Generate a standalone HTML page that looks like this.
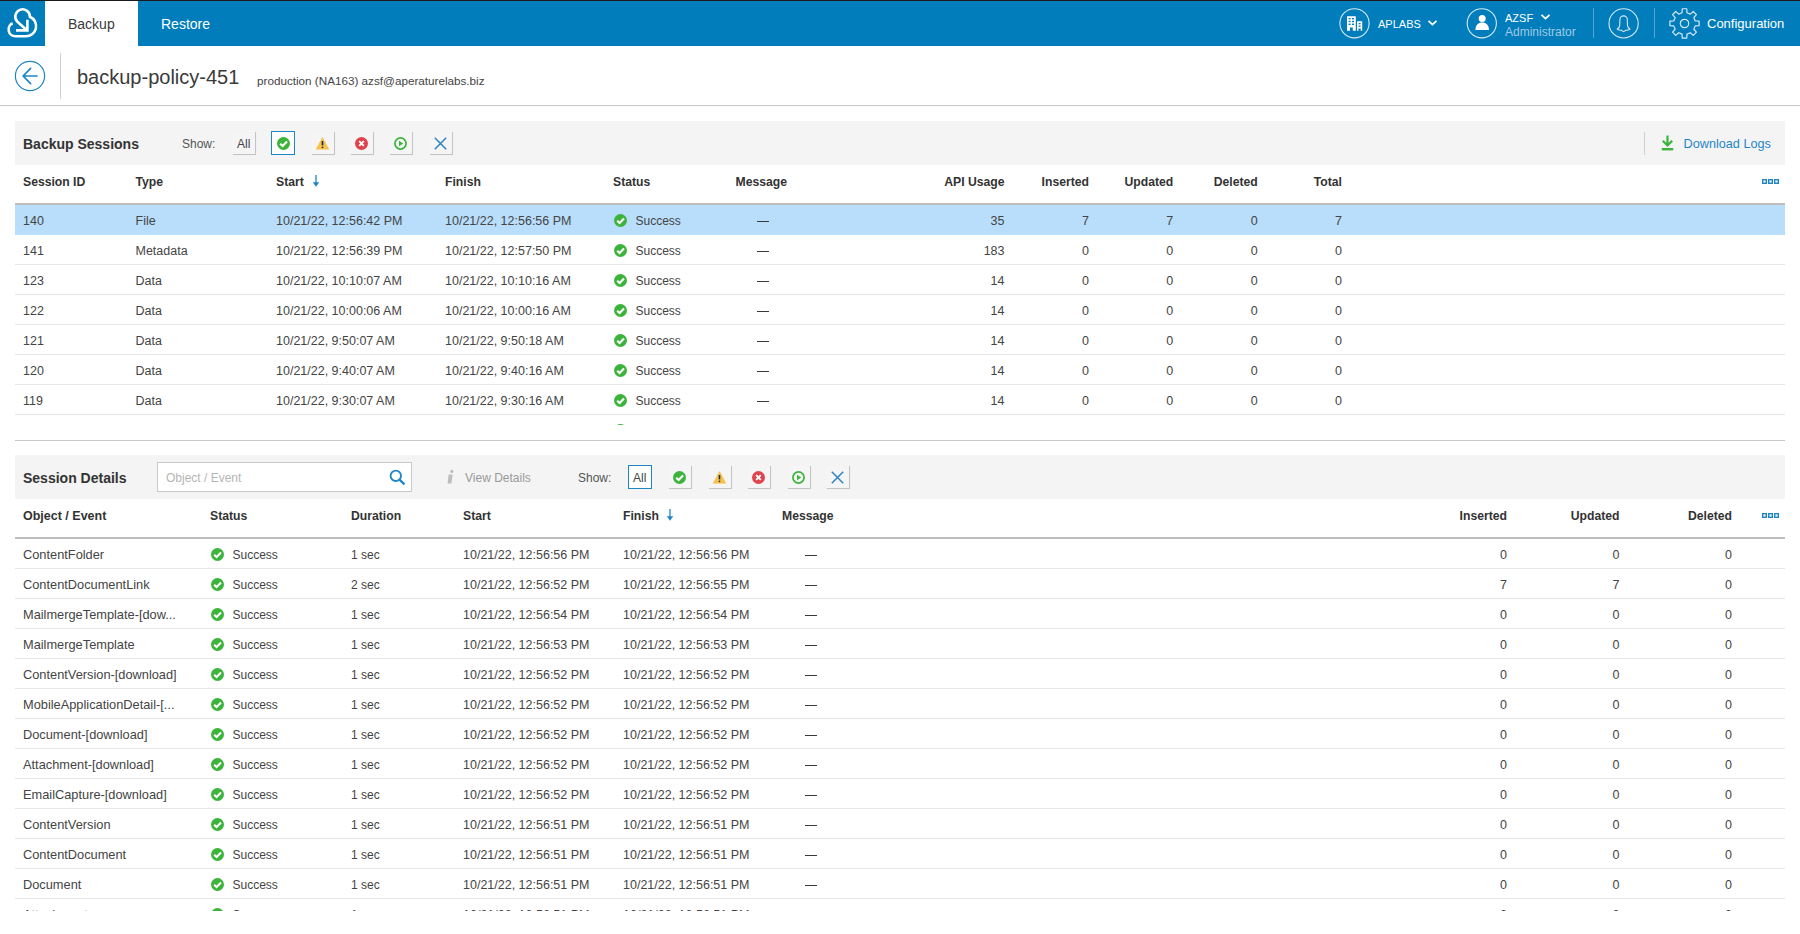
<!DOCTYPE html>
<html><head><meta charset="utf-8"><style>
html,body{margin:0;padding:0;}
body{width:1800px;height:934px;overflow:hidden;position:relative;background:#fff;font-family:"Liberation Sans", sans-serif;}
.t{position:absolute;white-space:nowrap;line-height:normal;}
</style></head><body>
<div style="position:absolute;left:0px;top:0px;width:1800px;height:1px;background:#1b1b1b"></div><div style="position:absolute;left:0px;top:1px;width:1800px;height:45px;background:#017dbb"></div><div style="position:absolute;left:45px;top:1px;width:93px;height:45px;background:#fff"></div><svg style="position:absolute;left:0;top:0" width="46" height="46" viewBox="0 0 46 46">
<path d="M12.6 23.3 A6.8 6.8 0 0 0 15.5 36.3 L25.9 36.3 A10.2 10.2 0 0 0 29.9 16.7 A7.3 7.3 0 1 0 17.44 21.76 L27.2 30.5 M27.4 19.7 L27.4 30.4 L16 30.4"
 fill="none" stroke="#fff" stroke-width="2.6" stroke-linejoin="miter" stroke-linecap="butt"/></svg><div class="t" style="left:68px;top:16px;font-size:14px;font-weight:400;color:#3a3a3a;">Backup</div><div class="t" style="left:161px;top:16px;font-size:14px;font-weight:400;color:#fff;">Restore</div><svg style="position:absolute;left:1339px;top:8px" width="31" height="31" viewBox="0 0 31 31">
<circle cx="15.5" cy="15.3" r="14.6" fill="none" stroke="#d6e9f5" stroke-width="1.1"/>
<g fill="#fff">
<path d="M8 8.2h8.8v14.6h-3v-3.2h-2.8v3.2H8z"/>
<path d="M18 13.2h5.2v9.6h-1.5v-2.2h-2.2v2.2H18z"/>
</g>
<g fill="#017dbb">
<rect x="9.6" y="10" width="2" height="1.4"/><rect x="13" y="10" width="2" height="1.4"/>
<rect x="9.6" y="12.8" width="2" height="1.4"/><rect x="13" y="12.8" width="2" height="1.4"/>
<rect x="9.6" y="15.6" width="2" height="1.4"/><rect x="13" y="15.6" width="2" height="1.4"/>
<rect x="19.6" y="15" width="2" height="1.3"/><rect x="19.6" y="17.6" width="2" height="1.3"/>
</g></svg><div class="t" style="left:1378px;top:18px;font-size:11px;font-weight:400;color:#fff;">APLABS</div><svg style="position:absolute;left:1427px;top:19px" width="11" height="8" viewBox="0 0 11 8">
<path d="M1.5 1.8 L5.5 5.6 L9.5 1.8" fill="none" stroke="#fff" stroke-width="1.8"/></svg><svg style="position:absolute;left:1466px;top:8px" width="31" height="31" viewBox="0 0 31 31">
<circle cx="15.8" cy="15.3" r="14.6" fill="none" stroke="#d6e9f5" stroke-width="1.1"/>
<circle cx="16.2" cy="10.6" r="3.5" fill="#fff"/>
<path d="M9.4 22 C9.6 16.8 12.5 14.6 16.2 14.6 C19.9 14.6 22.8 16.8 23 22 Z" fill="#fff"/></svg><div class="t" style="left:1505px;top:12px;font-size:11px;font-weight:400;color:#fff;">AZSF</div><svg style="position:absolute;left:1540px;top:13px" width="11" height="8" viewBox="0 0 11 8">
<path d="M1.5 1.8 L5.5 5.6 L9.5 1.8" fill="none" stroke="#fff" stroke-width="1.8"/></svg><div class="t" style="left:1505px;top:25px;font-size:12px;font-weight:400;color:#9fc9e5;">Administrator</div><div style="position:absolute;left:1593px;top:8px;width:1px;height:30px;background:#5aa3d3"></div><svg style="position:absolute;left:1608px;top:8px" width="31" height="31" viewBox="0 0 31 31">
<circle cx="15.6" cy="15.4" r="14.6" fill="none" stroke="#d6e9f5" stroke-width="1.1"/>
<path d="M11.9 11.6 A3.7 3.7 0 0 1 19.3 11.6 L19.5 17.6 C19.7 19.2 20.7 20.2 22 21.2 C21.2 22.2 19.4 22.1 17.8 22.3 C17 22.9 16.3 23.6 15.6 23.6 C14.9 23.6 14.2 22.9 13.4 22.3 C11.8 22.1 10 22.2 9.2 21.2 C10.5 20.2 11.5 19.2 11.7 17.6 Z" fill="none" stroke="#d6e9f5" stroke-width="1.1" stroke-linejoin="round"/></svg><div style="position:absolute;left:1654px;top:8px;width:1px;height:30px;background:#5aa3d3"></div><svg style="position:absolute;left:1669px;top:8px" width="31" height="31" viewBox="0 0 31 31">
<path d="M13.04 4.68 L13.24 0.77 L17.76 0.77 L17.96 4.68 L21.34 6.08 L24.24 3.46 L27.44 6.66 L24.82 9.56 L26.22 12.94 L30.13 13.14 L30.13 17.66 L26.22 17.86 L24.82 21.24 L27.44 24.14 L24.24 27.34 L21.34 24.72 L17.96 26.12 L17.76 30.03 L13.24 30.03 L13.04 26.12 L9.66 24.72 L6.76 27.34 L3.56 24.14 L6.18 21.24 L4.78 17.86 L0.87 17.66 L0.87 13.14 L4.78 12.94 L6.18 9.56 L3.56 6.66 L6.76 3.46 L9.66 6.08 Z" fill="none" stroke="#d6e9f5" stroke-width="1.2" stroke-linejoin="round"/>
<circle cx="15.5" cy="15.5" r="4.2" fill="none" stroke="#d6e9f5" stroke-width="1.2"/></svg><div class="t" style="left:1707px;top:16px;font-size:13px;font-weight:400;color:#fff;">Configuration</div><svg style="position:absolute;left:14px;top:60px" width="32" height="32" viewBox="0 0 32 32">
<circle cx="16" cy="16" r="14.6" fill="none" stroke="#1f86c6" stroke-width="1.2"/>
<path d="M9.4 16 H23 M16.6 8.4 L9.2 16 L16.6 23.6" fill="none" stroke="#1f86c6" stroke-width="1.7" stroke-linecap="round"/></svg><div style="position:absolute;left:60px;top:53px;width:1px;height:46px;background:#cfcfcf"></div><div class="t" style="left:77px;top:66px;font-size:20px;font-weight:400;color:#3a3a3a;">backup-policy-451</div><div class="t" style="left:257px;top:73.5px;font-size:11.7px;font-weight:400;color:#444;">production (NA163) azsf@aperaturelabs.biz</div><div style="position:absolute;left:0px;top:105px;width:1800px;height:1px;background:#c8c8c8"></div><div style="position:absolute;left:15px;top:121px;width:1770px;height:44px;background:#f4f4f4"></div><div class="t" style="left:23px;top:136px;font-size:14px;font-weight:700;color:#333;">Backup Sessions</div><div class="t" style="left:182px;top:137px;font-size:12px;font-weight:400;color:#555;">Show:</div><div style="position:absolute;left:232px;top:131px;width:23px;height:23px;background:#f5f5f5;box-shadow:1px 1px 0.6px #c4c4c4;"></div><div class="t" style="left:237px;top:137px;font-size:12px;font-weight:400;color:#444;">All</div><div style="position:absolute;left:271px;top:131px;width:24px;height:24px;background:#fff;border:1px solid #1f86c6;box-sizing:border-box;"></div><svg style="position:absolute;left:276.5px;top:136.5px" width="13" height="13" viewBox="0 0 13 13"><circle cx="6.5" cy="6.5" r="6.5" fill="#3cb43c"/><path d="M3.2 6.7 L5.6 9 L10 4.5" fill="none" stroke="#fff" stroke-width="2.1"/></svg><div style="position:absolute;left:311px;top:131px;width:23px;height:23px;background:#f5f5f5;box-shadow:1px 1px 0.6px #c4c4c4;"></div><svg style="position:absolute;left:316px;top:137px" width="13" height="13" viewBox="0 0 13 13"><path d="M6.5 0.6 L12.8 12.2 L0.2 12.2 Z" fill="#f5c34a" stroke="#f5c34a" stroke-width="0.6" stroke-linejoin="round"/><path d="M6.5 4 V8.4" stroke="#1f2a44" stroke-width="1.6"/><circle cx="6.5" cy="10.3" r="0.9" fill="#1f2a44"/></svg><div style="position:absolute;left:350px;top:131px;width:23px;height:23px;background:#f5f5f5;box-shadow:1px 1px 0.6px #c4c4c4;"></div><svg style="position:absolute;left:355px;top:137px" width="13" height="13" viewBox="0 0 13 13"><circle cx="6.5" cy="6.5" r="6.5" fill="#e0434b"/><path d="M4.2 4.2 L8.8 8.8 M8.8 4.2 L4.2 8.8" stroke="#fff" stroke-width="1.9"/></svg><div style="position:absolute;left:389px;top:131px;width:23px;height:23px;background:#f5f5f5;box-shadow:1px 1px 0.6px #c4c4c4;"></div><svg style="position:absolute;left:394px;top:137px" width="13" height="13" viewBox="0 0 13 13"><circle cx="6.5" cy="6.5" r="5.6" fill="none" stroke="#3cb43c" stroke-width="1.7"/><path d="M5 3.8 L9.2 6.5 L5 9.2 Z" fill="#3cb43c"/></svg><div style="position:absolute;left:429px;top:131px;width:23px;height:23px;background:#f5f5f5;box-shadow:1px 1px 0.6px #c4c4c4;"></div><svg style="position:absolute;left:434px;top:137px" width="13" height="13" viewBox="0 0 13 13"><path d="M0.8 0.8 L12.2 12.2 M12.2 0.8 L0.8 12.2" stroke="#2b83c4" stroke-width="1.5"/></svg><div style="position:absolute;left:1644px;top:132px;width:1px;height:23px;background:#d0d0d0"></div><svg style="position:absolute;left:1661px;top:135px" width="13" height="17" viewBox="0 0 13 17"><path d="M6.5 0.5 V10.5 M1.8 5.8 L6.5 10.5 L11.2 5.8" fill="none" stroke="#3cb43c" stroke-width="2.2"/><rect x="0.8" y="13" width="11.4" height="2.4" fill="#3cb43c"/></svg><div class="t" style="left:1683.5px;top:137px;font-size:12.7px;font-weight:400;color:#1f86c6;">Download Logs</div><div class="t" style="left:23px;top:175px;font-size:12.2px;font-weight:700;color:#333;">Session ID</div><div class="t" style="left:135.5px;top:175px;font-size:12.2px;font-weight:700;color:#333;">Type</div><div class="t" style="left:276px;top:175px;font-size:12.2px;font-weight:700;color:#333;">Start</div><svg style="position:absolute;left:312px;top:174px" width="8" height="13" viewBox="0 0 8 13"><path d="M4 1 V9" stroke="#1f86c6" stroke-width="1.3"/><path d="M0.8 8.2 L7.2 8.2 L4 12.8 Z" fill="#1f86c6"/></svg><div class="t" style="left:445px;top:175px;font-size:12.2px;font-weight:700;color:#333;">Finish</div><div class="t" style="left:613px;top:175px;font-size:12.2px;font-weight:700;color:#333;">Status</div><div class="t" style="left:735.5px;top:175px;font-size:12.2px;font-weight:700;color:#333;">Message</div><div class="t" style="right:795.5px;top:175px;font-size:12.2px;font-weight:700;color:#333;">API Usage</div><div class="t" style="right:711px;top:175px;font-size:12.2px;font-weight:700;color:#333;">Inserted</div><div class="t" style="right:626.8px;top:175px;font-size:12.2px;font-weight:700;color:#333;">Updated</div><div class="t" style="right:542.2px;top:175px;font-size:12.2px;font-weight:700;color:#333;">Deleted</div><div class="t" style="right:458px;top:175px;font-size:12.2px;font-weight:700;color:#333;">Total</div><svg style="position:absolute;left:1762px;top:178.5px" width="17" height="6" viewBox="0 0 17 6"><g fill="none" stroke="#1f86c6" stroke-width="1.4"><rect x="0.7" y="0.7" width="3.6" height="3.6"/><rect x="6.7" y="0.7" width="3.6" height="3.6"/><rect x="12.7" y="0.7" width="3.6" height="3.6"/></g></svg><div style="position:absolute;left:15px;top:203px;width:1770px;height:2px;background:#bdbdbd"></div><div style="position:absolute;left:15px;top:205px;width:1770px;height:220px;overflow:hidden"><div style="position:absolute;left:0px;top:0px;width:1770px;height:30px;background:#b8defc"></div><div class="t" style="left:8px;top:9px;font-size:12.5px;font-weight:400;color:#444;">140</div><div class="t" style="left:120.5px;top:9px;font-size:12.5px;font-weight:400;color:#444;">File</div><div class="t" style="left:261px;top:9px;font-size:12.5px;font-weight:400;color:#444;">10/21/22, 12:56:42 PM</div><div class="t" style="left:430px;top:9px;font-size:12.5px;font-weight:400;color:#444;">10/21/22, 12:56:56 PM</div><svg style="position:absolute;left:599px;top:9px" width="13" height="13" viewBox="0 0 13 13"><circle cx="6.5" cy="6.5" r="6.5" fill="#3cb43c"/><path d="M3.2 6.7 L5.6 9 L10 4.5" fill="none" stroke="#fff" stroke-width="2.1"/></svg><div class="t" style="left:620.5px;top:9px;font-size:12px;font-weight:400;color:#444;">Success</div><div style="position:absolute;left:742px;top:16px;width:12px;height:1px;background:#3a3a3a"></div><div class="t" style="right:780.5px;top:9px;font-size:12.5px;font-weight:400;color:#444;">35</div><div class="t" style="right:696px;top:9px;font-size:12.5px;font-weight:400;color:#444;">7</div><div class="t" style="right:611.8px;top:9px;font-size:12.5px;font-weight:400;color:#444;">7</div><div class="t" style="right:527.2px;top:9px;font-size:12.5px;font-weight:400;color:#444;">0</div><div class="t" style="right:443px;top:9px;font-size:12.5px;font-weight:400;color:#444;">7</div><div style="position:absolute;left:0px;top:59px;width:1770px;height:1px;background:#e6e6e6"></div><div class="t" style="left:8px;top:39px;font-size:12.5px;font-weight:400;color:#444;">141</div><div class="t" style="left:120.5px;top:39px;font-size:12.5px;font-weight:400;color:#444;">Metadata</div><div class="t" style="left:261px;top:39px;font-size:12.5px;font-weight:400;color:#444;">10/21/22, 12:56:39 PM</div><div class="t" style="left:430px;top:39px;font-size:12.5px;font-weight:400;color:#444;">10/21/22, 12:57:50 PM</div><svg style="position:absolute;left:599px;top:39px" width="13" height="13" viewBox="0 0 13 13"><circle cx="6.5" cy="6.5" r="6.5" fill="#3cb43c"/><path d="M3.2 6.7 L5.6 9 L10 4.5" fill="none" stroke="#fff" stroke-width="2.1"/></svg><div class="t" style="left:620.5px;top:39px;font-size:12px;font-weight:400;color:#444;">Success</div><div style="position:absolute;left:742px;top:46px;width:12px;height:1px;background:#3a3a3a"></div><div class="t" style="right:780.5px;top:39px;font-size:12.5px;font-weight:400;color:#444;">183</div><div class="t" style="right:696px;top:39px;font-size:12.5px;font-weight:400;color:#444;">0</div><div class="t" style="right:611.8px;top:39px;font-size:12.5px;font-weight:400;color:#444;">0</div><div class="t" style="right:527.2px;top:39px;font-size:12.5px;font-weight:400;color:#444;">0</div><div class="t" style="right:443px;top:39px;font-size:12.5px;font-weight:400;color:#444;">0</div><div style="position:absolute;left:0px;top:89px;width:1770px;height:1px;background:#e6e6e6"></div><div class="t" style="left:8px;top:69px;font-size:12.5px;font-weight:400;color:#444;">123</div><div class="t" style="left:120.5px;top:69px;font-size:12.5px;font-weight:400;color:#444;">Data</div><div class="t" style="left:261px;top:69px;font-size:12.5px;font-weight:400;color:#444;">10/21/22, 10:10:07 AM</div><div class="t" style="left:430px;top:69px;font-size:12.5px;font-weight:400;color:#444;">10/21/22, 10:10:16 AM</div><svg style="position:absolute;left:599px;top:69px" width="13" height="13" viewBox="0 0 13 13"><circle cx="6.5" cy="6.5" r="6.5" fill="#3cb43c"/><path d="M3.2 6.7 L5.6 9 L10 4.5" fill="none" stroke="#fff" stroke-width="2.1"/></svg><div class="t" style="left:620.5px;top:69px;font-size:12px;font-weight:400;color:#444;">Success</div><div style="position:absolute;left:742px;top:76px;width:12px;height:1px;background:#3a3a3a"></div><div class="t" style="right:780.5px;top:69px;font-size:12.5px;font-weight:400;color:#444;">14</div><div class="t" style="right:696px;top:69px;font-size:12.5px;font-weight:400;color:#444;">0</div><div class="t" style="right:611.8px;top:69px;font-size:12.5px;font-weight:400;color:#444;">0</div><div class="t" style="right:527.2px;top:69px;font-size:12.5px;font-weight:400;color:#444;">0</div><div class="t" style="right:443px;top:69px;font-size:12.5px;font-weight:400;color:#444;">0</div><div style="position:absolute;left:0px;top:119px;width:1770px;height:1px;background:#e6e6e6"></div><div class="t" style="left:8px;top:99px;font-size:12.5px;font-weight:400;color:#444;">122</div><div class="t" style="left:120.5px;top:99px;font-size:12.5px;font-weight:400;color:#444;">Data</div><div class="t" style="left:261px;top:99px;font-size:12.5px;font-weight:400;color:#444;">10/21/22, 10:00:06 AM</div><div class="t" style="left:430px;top:99px;font-size:12.5px;font-weight:400;color:#444;">10/21/22, 10:00:16 AM</div><svg style="position:absolute;left:599px;top:99px" width="13" height="13" viewBox="0 0 13 13"><circle cx="6.5" cy="6.5" r="6.5" fill="#3cb43c"/><path d="M3.2 6.7 L5.6 9 L10 4.5" fill="none" stroke="#fff" stroke-width="2.1"/></svg><div class="t" style="left:620.5px;top:99px;font-size:12px;font-weight:400;color:#444;">Success</div><div style="position:absolute;left:742px;top:106px;width:12px;height:1px;background:#3a3a3a"></div><div class="t" style="right:780.5px;top:99px;font-size:12.5px;font-weight:400;color:#444;">14</div><div class="t" style="right:696px;top:99px;font-size:12.5px;font-weight:400;color:#444;">0</div><div class="t" style="right:611.8px;top:99px;font-size:12.5px;font-weight:400;color:#444;">0</div><div class="t" style="right:527.2px;top:99px;font-size:12.5px;font-weight:400;color:#444;">0</div><div class="t" style="right:443px;top:99px;font-size:12.5px;font-weight:400;color:#444;">0</div><div style="position:absolute;left:0px;top:149px;width:1770px;height:1px;background:#e6e6e6"></div><div class="t" style="left:8px;top:129px;font-size:12.5px;font-weight:400;color:#444;">121</div><div class="t" style="left:120.5px;top:129px;font-size:12.5px;font-weight:400;color:#444;">Data</div><div class="t" style="left:261px;top:129px;font-size:12.5px;font-weight:400;color:#444;">10/21/22, 9:50:07 AM</div><div class="t" style="left:430px;top:129px;font-size:12.5px;font-weight:400;color:#444;">10/21/22, 9:50:18 AM</div><svg style="position:absolute;left:599px;top:129px" width="13" height="13" viewBox="0 0 13 13"><circle cx="6.5" cy="6.5" r="6.5" fill="#3cb43c"/><path d="M3.2 6.7 L5.6 9 L10 4.5" fill="none" stroke="#fff" stroke-width="2.1"/></svg><div class="t" style="left:620.5px;top:129px;font-size:12px;font-weight:400;color:#444;">Success</div><div style="position:absolute;left:742px;top:136px;width:12px;height:1px;background:#3a3a3a"></div><div class="t" style="right:780.5px;top:129px;font-size:12.5px;font-weight:400;color:#444;">14</div><div class="t" style="right:696px;top:129px;font-size:12.5px;font-weight:400;color:#444;">0</div><div class="t" style="right:611.8px;top:129px;font-size:12.5px;font-weight:400;color:#444;">0</div><div class="t" style="right:527.2px;top:129px;font-size:12.5px;font-weight:400;color:#444;">0</div><div class="t" style="right:443px;top:129px;font-size:12.5px;font-weight:400;color:#444;">0</div><div style="position:absolute;left:0px;top:179px;width:1770px;height:1px;background:#e6e6e6"></div><div class="t" style="left:8px;top:159px;font-size:12.5px;font-weight:400;color:#444;">120</div><div class="t" style="left:120.5px;top:159px;font-size:12.5px;font-weight:400;color:#444;">Data</div><div class="t" style="left:261px;top:159px;font-size:12.5px;font-weight:400;color:#444;">10/21/22, 9:40:07 AM</div><div class="t" style="left:430px;top:159px;font-size:12.5px;font-weight:400;color:#444;">10/21/22, 9:40:16 AM</div><svg style="position:absolute;left:599px;top:159px" width="13" height="13" viewBox="0 0 13 13"><circle cx="6.5" cy="6.5" r="6.5" fill="#3cb43c"/><path d="M3.2 6.7 L5.6 9 L10 4.5" fill="none" stroke="#fff" stroke-width="2.1"/></svg><div class="t" style="left:620.5px;top:159px;font-size:12px;font-weight:400;color:#444;">Success</div><div style="position:absolute;left:742px;top:166px;width:12px;height:1px;background:#3a3a3a"></div><div class="t" style="right:780.5px;top:159px;font-size:12.5px;font-weight:400;color:#444;">14</div><div class="t" style="right:696px;top:159px;font-size:12.5px;font-weight:400;color:#444;">0</div><div class="t" style="right:611.8px;top:159px;font-size:12.5px;font-weight:400;color:#444;">0</div><div class="t" style="right:527.2px;top:159px;font-size:12.5px;font-weight:400;color:#444;">0</div><div class="t" style="right:443px;top:159px;font-size:12.5px;font-weight:400;color:#444;">0</div><div style="position:absolute;left:0px;top:209px;width:1770px;height:1px;background:#e6e6e6"></div><div class="t" style="left:8px;top:189px;font-size:12.5px;font-weight:400;color:#444;">119</div><div class="t" style="left:120.5px;top:189px;font-size:12.5px;font-weight:400;color:#444;">Data</div><div class="t" style="left:261px;top:189px;font-size:12.5px;font-weight:400;color:#444;">10/21/22, 9:30:07 AM</div><div class="t" style="left:430px;top:189px;font-size:12.5px;font-weight:400;color:#444;">10/21/22, 9:30:16 AM</div><svg style="position:absolute;left:599px;top:189px" width="13" height="13" viewBox="0 0 13 13"><circle cx="6.5" cy="6.5" r="6.5" fill="#3cb43c"/><path d="M3.2 6.7 L5.6 9 L10 4.5" fill="none" stroke="#fff" stroke-width="2.1"/></svg><div class="t" style="left:620.5px;top:189px;font-size:12px;font-weight:400;color:#444;">Success</div><div style="position:absolute;left:742px;top:196px;width:12px;height:1px;background:#3a3a3a"></div><div class="t" style="right:780.5px;top:189px;font-size:12.5px;font-weight:400;color:#444;">14</div><div class="t" style="right:696px;top:189px;font-size:12.5px;font-weight:400;color:#444;">0</div><div class="t" style="right:611.8px;top:189px;font-size:12.5px;font-weight:400;color:#444;">0</div><div class="t" style="right:527.2px;top:189px;font-size:12.5px;font-weight:400;color:#444;">0</div><div class="t" style="right:443px;top:189px;font-size:12.5px;font-weight:400;color:#444;">0</div><div style="position:absolute;left:0px;top:239px;width:1770px;height:1px;background:#e6e6e6"></div><div class="t" style="left:8px;top:219px;font-size:12.5px;font-weight:400;color:#444;">118</div><div class="t" style="left:120.5px;top:219px;font-size:12.5px;font-weight:400;color:#444;">Data</div><div class="t" style="left:261px;top:219px;font-size:12.5px;font-weight:400;color:#444;">10/21/22, 9:20:07 AM</div><div class="t" style="left:430px;top:219px;font-size:12.5px;font-weight:400;color:#444;">10/21/22, 9:20:16 AM</div><svg style="position:absolute;left:599px;top:219px" width="13" height="13" viewBox="0 0 13 13"><circle cx="6.5" cy="6.5" r="6.5" fill="#3cb43c"/><path d="M3.2 6.7 L5.6 9 L10 4.5" fill="none" stroke="#fff" stroke-width="2.1"/></svg><div class="t" style="left:620.5px;top:219px;font-size:12px;font-weight:400;color:#444;">Success</div><div style="position:absolute;left:742px;top:226px;width:12px;height:1px;background:#3a3a3a"></div><div class="t" style="right:780.5px;top:219px;font-size:12.5px;font-weight:400;color:#444;">14</div><div class="t" style="right:696px;top:219px;font-size:12.5px;font-weight:400;color:#444;">0</div><div class="t" style="right:611.8px;top:219px;font-size:12.5px;font-weight:400;color:#444;">0</div><div class="t" style="right:527.2px;top:219px;font-size:12.5px;font-weight:400;color:#444;">0</div><div class="t" style="right:443px;top:219px;font-size:12.5px;font-weight:400;color:#444;">0</div></div><div style="position:absolute;left:15px;top:440px;width:1770px;height:1px;background:#c8c8c8"></div><div style="position:absolute;left:15px;top:455px;width:1770px;height:44px;background:#f4f4f4"></div><div class="t" style="left:23px;top:470px;font-size:14px;font-weight:700;color:#333;">Session Details</div><div style="position:absolute;left:157px;top:462px;width:255px;height:30px;background:#fff;border:1px solid #c9c9c9;box-sizing:border-box"></div><div class="t" style="left:166px;top:471px;font-size:12px;font-weight:400;color:#b5b5b5;">Object / Event</div><svg style="position:absolute;left:389px;top:469px" width="17" height="17" viewBox="0 0 17 17"><circle cx="6.8" cy="6.8" r="5.2" fill="none" stroke="#1f86c6" stroke-width="1.9"/><path d="M10.6 10.6 L15.4 15.4" stroke="#1f86c6" stroke-width="2.2"/></svg><svg style="position:absolute;left:445px;top:469px" width="10" height="16" viewBox="0 0 10 16"><circle cx="6.8" cy="2.4" r="1.6" fill="#bdbdbd"/><path d="M3.6 5.6 L7.6 5.6 L6.4 14.6 L2.6 14.6 Z" fill="#bdbdbd"/></svg><div class="t" style="left:465px;top:471px;font-size:12px;font-weight:400;color:#9a9a9a;">View Details</div><div class="t" style="left:578px;top:471px;font-size:12px;font-weight:400;color:#555;">Show:</div><div style="position:absolute;left:628px;top:465px;width:24px;height:24px;background:#fff;border:1px solid #1f86c6;box-sizing:border-box;"></div><div class="t" style="left:633px;top:471px;font-size:12px;font-weight:400;color:#444;">All</div><div style="position:absolute;left:668px;top:465px;width:23px;height:23px;background:#f5f5f5;box-shadow:1px 1px 0.6px #c4c4c4;"></div><svg style="position:absolute;left:673px;top:471px" width="13" height="13" viewBox="0 0 13 13"><circle cx="6.5" cy="6.5" r="6.5" fill="#3cb43c"/><path d="M3.2 6.7 L5.6 9 L10 4.5" fill="none" stroke="#fff" stroke-width="2.1"/></svg><div style="position:absolute;left:708px;top:465px;width:23px;height:23px;background:#f5f5f5;box-shadow:1px 1px 0.6px #c4c4c4;"></div><svg style="position:absolute;left:713px;top:471px" width="13" height="13" viewBox="0 0 13 13"><path d="M6.5 0.6 L12.8 12.2 L0.2 12.2 Z" fill="#f5c34a" stroke="#f5c34a" stroke-width="0.6" stroke-linejoin="round"/><path d="M6.5 4 V8.4" stroke="#1f2a44" stroke-width="1.6"/><circle cx="6.5" cy="10.3" r="0.9" fill="#1f2a44"/></svg><div style="position:absolute;left:747px;top:465px;width:23px;height:23px;background:#f5f5f5;box-shadow:1px 1px 0.6px #c4c4c4;"></div><svg style="position:absolute;left:752px;top:471px" width="13" height="13" viewBox="0 0 13 13"><circle cx="6.5" cy="6.5" r="6.5" fill="#e0434b"/><path d="M4.2 4.2 L8.8 8.8 M8.8 4.2 L4.2 8.8" stroke="#fff" stroke-width="1.9"/></svg><div style="position:absolute;left:787px;top:465px;width:23px;height:23px;background:#f5f5f5;box-shadow:1px 1px 0.6px #c4c4c4;"></div><svg style="position:absolute;left:792px;top:471px" width="13" height="13" viewBox="0 0 13 13"><circle cx="6.5" cy="6.5" r="5.6" fill="none" stroke="#3cb43c" stroke-width="1.7"/><path d="M5 3.8 L9.2 6.5 L5 9.2 Z" fill="#3cb43c"/></svg><div style="position:absolute;left:826px;top:465px;width:23px;height:23px;background:#f5f5f5;box-shadow:1px 1px 0.6px #c4c4c4;"></div><svg style="position:absolute;left:831px;top:471px" width="13" height="13" viewBox="0 0 13 13"><path d="M0.8 0.8 L12.2 12.2 M12.2 0.8 L0.8 12.2" stroke="#2b83c4" stroke-width="1.5"/></svg><div class="t" style="left:23px;top:509px;font-size:12.5px;font-weight:700;color:#333;">Object / Event</div><div class="t" style="left:210px;top:509px;font-size:12.2px;font-weight:700;color:#333;">Status</div><div class="t" style="left:351px;top:509px;font-size:12.2px;font-weight:700;color:#333;">Duration</div><div class="t" style="left:463px;top:509px;font-size:12.2px;font-weight:700;color:#333;">Start</div><div class="t" style="left:623px;top:509px;font-size:12.2px;font-weight:700;color:#333;">Finish</div><svg style="position:absolute;left:666px;top:508px" width="8" height="13" viewBox="0 0 8 13"><path d="M4 1 V9" stroke="#1f86c6" stroke-width="1.3"/><path d="M0.8 8.2 L7.2 8.2 L4 12.8 Z" fill="#1f86c6"/></svg><div class="t" style="left:782px;top:509px;font-size:12.2px;font-weight:700;color:#333;">Message</div><div class="t" style="right:293px;top:509px;font-size:12.2px;font-weight:700;color:#333;">Inserted</div><div class="t" style="right:180.5px;top:509px;font-size:12.2px;font-weight:700;color:#333;">Updated</div><div class="t" style="right:68px;top:509px;font-size:12.2px;font-weight:700;color:#333;">Deleted</div><svg style="position:absolute;left:1762px;top:512.5px" width="17" height="6" viewBox="0 0 17 6"><g fill="none" stroke="#1f86c6" stroke-width="1.4"><rect x="0.7" y="0.7" width="3.6" height="3.6"/><rect x="6.7" y="0.7" width="3.6" height="3.6"/><rect x="12.7" y="0.7" width="3.6" height="3.6"/></g></svg><div style="position:absolute;left:15px;top:537px;width:1770px;height:2px;background:#bdbdbd"></div><div style="position:absolute;left:15px;top:539px;width:1770px;height:372px;overflow:hidden"><div style="position:absolute;left:0px;top:29px;width:1770px;height:1px;background:#e6e6e6"></div><div class="t" style="left:8px;top:8px;font-size:12.8px;font-weight:400;color:#444;">ContentFolder</div><svg style="position:absolute;left:196px;top:9px" width="13" height="13" viewBox="0 0 13 13"><circle cx="6.5" cy="6.5" r="6.5" fill="#3cb43c"/><path d="M3.2 6.7 L5.6 9 L10 4.5" fill="none" stroke="#fff" stroke-width="2.1"/></svg><div class="t" style="left:217.5px;top:9px;font-size:12px;font-weight:400;color:#444;">Success</div><div class="t" style="left:336px;top:9px;font-size:12px;font-weight:400;color:#444;">1 sec</div><div class="t" style="left:448px;top:9px;font-size:12.5px;font-weight:400;color:#444;">10/21/22, 12:56:56 PM</div><div class="t" style="left:608px;top:9px;font-size:12.5px;font-weight:400;color:#444;">10/21/22, 12:56:56 PM</div><div style="position:absolute;left:789.5px;top:16px;width:12px;height:1px;background:#3a3a3a"></div><div class="t" style="right:278px;top:9px;font-size:12.5px;font-weight:400;color:#444;">0</div><div class="t" style="right:165.5px;top:9px;font-size:12.5px;font-weight:400;color:#444;">0</div><div class="t" style="right:53px;top:9px;font-size:12.5px;font-weight:400;color:#444;">0</div><div style="position:absolute;left:0px;top:59px;width:1770px;height:1px;background:#e6e6e6"></div><div class="t" style="left:8px;top:38px;font-size:12.8px;font-weight:400;color:#444;">ContentDocumentLink</div><svg style="position:absolute;left:196px;top:39px" width="13" height="13" viewBox="0 0 13 13"><circle cx="6.5" cy="6.5" r="6.5" fill="#3cb43c"/><path d="M3.2 6.7 L5.6 9 L10 4.5" fill="none" stroke="#fff" stroke-width="2.1"/></svg><div class="t" style="left:217.5px;top:39px;font-size:12px;font-weight:400;color:#444;">Success</div><div class="t" style="left:336px;top:39px;font-size:12px;font-weight:400;color:#444;">2 sec</div><div class="t" style="left:448px;top:39px;font-size:12.5px;font-weight:400;color:#444;">10/21/22, 12:56:52 PM</div><div class="t" style="left:608px;top:39px;font-size:12.5px;font-weight:400;color:#444;">10/21/22, 12:56:55 PM</div><div style="position:absolute;left:789.5px;top:46px;width:12px;height:1px;background:#3a3a3a"></div><div class="t" style="right:278px;top:39px;font-size:12.5px;font-weight:400;color:#444;">7</div><div class="t" style="right:165.5px;top:39px;font-size:12.5px;font-weight:400;color:#444;">7</div><div class="t" style="right:53px;top:39px;font-size:12.5px;font-weight:400;color:#444;">0</div><div style="position:absolute;left:0px;top:89px;width:1770px;height:1px;background:#e6e6e6"></div><div class="t" style="left:8px;top:68px;font-size:12.8px;font-weight:400;color:#444;">MailmergeTemplate-[dow...</div><svg style="position:absolute;left:196px;top:69px" width="13" height="13" viewBox="0 0 13 13"><circle cx="6.5" cy="6.5" r="6.5" fill="#3cb43c"/><path d="M3.2 6.7 L5.6 9 L10 4.5" fill="none" stroke="#fff" stroke-width="2.1"/></svg><div class="t" style="left:217.5px;top:69px;font-size:12px;font-weight:400;color:#444;">Success</div><div class="t" style="left:336px;top:69px;font-size:12px;font-weight:400;color:#444;">1 sec</div><div class="t" style="left:448px;top:69px;font-size:12.5px;font-weight:400;color:#444;">10/21/22, 12:56:54 PM</div><div class="t" style="left:608px;top:69px;font-size:12.5px;font-weight:400;color:#444;">10/21/22, 12:56:54 PM</div><div style="position:absolute;left:789.5px;top:76px;width:12px;height:1px;background:#3a3a3a"></div><div class="t" style="right:278px;top:69px;font-size:12.5px;font-weight:400;color:#444;">0</div><div class="t" style="right:165.5px;top:69px;font-size:12.5px;font-weight:400;color:#444;">0</div><div class="t" style="right:53px;top:69px;font-size:12.5px;font-weight:400;color:#444;">0</div><div style="position:absolute;left:0px;top:119px;width:1770px;height:1px;background:#e6e6e6"></div><div class="t" style="left:8px;top:98px;font-size:12.8px;font-weight:400;color:#444;">MailmergeTemplate</div><svg style="position:absolute;left:196px;top:99px" width="13" height="13" viewBox="0 0 13 13"><circle cx="6.5" cy="6.5" r="6.5" fill="#3cb43c"/><path d="M3.2 6.7 L5.6 9 L10 4.5" fill="none" stroke="#fff" stroke-width="2.1"/></svg><div class="t" style="left:217.5px;top:99px;font-size:12px;font-weight:400;color:#444;">Success</div><div class="t" style="left:336px;top:99px;font-size:12px;font-weight:400;color:#444;">1 sec</div><div class="t" style="left:448px;top:99px;font-size:12.5px;font-weight:400;color:#444;">10/21/22, 12:56:53 PM</div><div class="t" style="left:608px;top:99px;font-size:12.5px;font-weight:400;color:#444;">10/21/22, 12:56:53 PM</div><div style="position:absolute;left:789.5px;top:106px;width:12px;height:1px;background:#3a3a3a"></div><div class="t" style="right:278px;top:99px;font-size:12.5px;font-weight:400;color:#444;">0</div><div class="t" style="right:165.5px;top:99px;font-size:12.5px;font-weight:400;color:#444;">0</div><div class="t" style="right:53px;top:99px;font-size:12.5px;font-weight:400;color:#444;">0</div><div style="position:absolute;left:0px;top:149px;width:1770px;height:1px;background:#e6e6e6"></div><div class="t" style="left:8px;top:128px;font-size:12.8px;font-weight:400;color:#444;">ContentVersion-[download]</div><svg style="position:absolute;left:196px;top:129px" width="13" height="13" viewBox="0 0 13 13"><circle cx="6.5" cy="6.5" r="6.5" fill="#3cb43c"/><path d="M3.2 6.7 L5.6 9 L10 4.5" fill="none" stroke="#fff" stroke-width="2.1"/></svg><div class="t" style="left:217.5px;top:129px;font-size:12px;font-weight:400;color:#444;">Success</div><div class="t" style="left:336px;top:129px;font-size:12px;font-weight:400;color:#444;">1 sec</div><div class="t" style="left:448px;top:129px;font-size:12.5px;font-weight:400;color:#444;">10/21/22, 12:56:52 PM</div><div class="t" style="left:608px;top:129px;font-size:12.5px;font-weight:400;color:#444;">10/21/22, 12:56:52 PM</div><div style="position:absolute;left:789.5px;top:136px;width:12px;height:1px;background:#3a3a3a"></div><div class="t" style="right:278px;top:129px;font-size:12.5px;font-weight:400;color:#444;">0</div><div class="t" style="right:165.5px;top:129px;font-size:12.5px;font-weight:400;color:#444;">0</div><div class="t" style="right:53px;top:129px;font-size:12.5px;font-weight:400;color:#444;">0</div><div style="position:absolute;left:0px;top:179px;width:1770px;height:1px;background:#e6e6e6"></div><div class="t" style="left:8px;top:158px;font-size:12.8px;font-weight:400;color:#444;">MobileApplicationDetail-[...</div><svg style="position:absolute;left:196px;top:159px" width="13" height="13" viewBox="0 0 13 13"><circle cx="6.5" cy="6.5" r="6.5" fill="#3cb43c"/><path d="M3.2 6.7 L5.6 9 L10 4.5" fill="none" stroke="#fff" stroke-width="2.1"/></svg><div class="t" style="left:217.5px;top:159px;font-size:12px;font-weight:400;color:#444;">Success</div><div class="t" style="left:336px;top:159px;font-size:12px;font-weight:400;color:#444;">1 sec</div><div class="t" style="left:448px;top:159px;font-size:12.5px;font-weight:400;color:#444;">10/21/22, 12:56:52 PM</div><div class="t" style="left:608px;top:159px;font-size:12.5px;font-weight:400;color:#444;">10/21/22, 12:56:52 PM</div><div style="position:absolute;left:789.5px;top:166px;width:12px;height:1px;background:#3a3a3a"></div><div class="t" style="right:278px;top:159px;font-size:12.5px;font-weight:400;color:#444;">0</div><div class="t" style="right:165.5px;top:159px;font-size:12.5px;font-weight:400;color:#444;">0</div><div class="t" style="right:53px;top:159px;font-size:12.5px;font-weight:400;color:#444;">0</div><div style="position:absolute;left:0px;top:209px;width:1770px;height:1px;background:#e6e6e6"></div><div class="t" style="left:8px;top:188px;font-size:12.8px;font-weight:400;color:#444;">Document-[download]</div><svg style="position:absolute;left:196px;top:189px" width="13" height="13" viewBox="0 0 13 13"><circle cx="6.5" cy="6.5" r="6.5" fill="#3cb43c"/><path d="M3.2 6.7 L5.6 9 L10 4.5" fill="none" stroke="#fff" stroke-width="2.1"/></svg><div class="t" style="left:217.5px;top:189px;font-size:12px;font-weight:400;color:#444;">Success</div><div class="t" style="left:336px;top:189px;font-size:12px;font-weight:400;color:#444;">1 sec</div><div class="t" style="left:448px;top:189px;font-size:12.5px;font-weight:400;color:#444;">10/21/22, 12:56:52 PM</div><div class="t" style="left:608px;top:189px;font-size:12.5px;font-weight:400;color:#444;">10/21/22, 12:56:52 PM</div><div style="position:absolute;left:789.5px;top:196px;width:12px;height:1px;background:#3a3a3a"></div><div class="t" style="right:278px;top:189px;font-size:12.5px;font-weight:400;color:#444;">0</div><div class="t" style="right:165.5px;top:189px;font-size:12.5px;font-weight:400;color:#444;">0</div><div class="t" style="right:53px;top:189px;font-size:12.5px;font-weight:400;color:#444;">0</div><div style="position:absolute;left:0px;top:239px;width:1770px;height:1px;background:#e6e6e6"></div><div class="t" style="left:8px;top:218px;font-size:12.8px;font-weight:400;color:#444;">Attachment-[download]</div><svg style="position:absolute;left:196px;top:219px" width="13" height="13" viewBox="0 0 13 13"><circle cx="6.5" cy="6.5" r="6.5" fill="#3cb43c"/><path d="M3.2 6.7 L5.6 9 L10 4.5" fill="none" stroke="#fff" stroke-width="2.1"/></svg><div class="t" style="left:217.5px;top:219px;font-size:12px;font-weight:400;color:#444;">Success</div><div class="t" style="left:336px;top:219px;font-size:12px;font-weight:400;color:#444;">1 sec</div><div class="t" style="left:448px;top:219px;font-size:12.5px;font-weight:400;color:#444;">10/21/22, 12:56:52 PM</div><div class="t" style="left:608px;top:219px;font-size:12.5px;font-weight:400;color:#444;">10/21/22, 12:56:52 PM</div><div style="position:absolute;left:789.5px;top:226px;width:12px;height:1px;background:#3a3a3a"></div><div class="t" style="right:278px;top:219px;font-size:12.5px;font-weight:400;color:#444;">0</div><div class="t" style="right:165.5px;top:219px;font-size:12.5px;font-weight:400;color:#444;">0</div><div class="t" style="right:53px;top:219px;font-size:12.5px;font-weight:400;color:#444;">0</div><div style="position:absolute;left:0px;top:269px;width:1770px;height:1px;background:#e6e6e6"></div><div class="t" style="left:8px;top:248px;font-size:12.8px;font-weight:400;color:#444;">EmailCapture-[download]</div><svg style="position:absolute;left:196px;top:249px" width="13" height="13" viewBox="0 0 13 13"><circle cx="6.5" cy="6.5" r="6.5" fill="#3cb43c"/><path d="M3.2 6.7 L5.6 9 L10 4.5" fill="none" stroke="#fff" stroke-width="2.1"/></svg><div class="t" style="left:217.5px;top:249px;font-size:12px;font-weight:400;color:#444;">Success</div><div class="t" style="left:336px;top:249px;font-size:12px;font-weight:400;color:#444;">1 sec</div><div class="t" style="left:448px;top:249px;font-size:12.5px;font-weight:400;color:#444;">10/21/22, 12:56:52 PM</div><div class="t" style="left:608px;top:249px;font-size:12.5px;font-weight:400;color:#444;">10/21/22, 12:56:52 PM</div><div style="position:absolute;left:789.5px;top:256px;width:12px;height:1px;background:#3a3a3a"></div><div class="t" style="right:278px;top:249px;font-size:12.5px;font-weight:400;color:#444;">0</div><div class="t" style="right:165.5px;top:249px;font-size:12.5px;font-weight:400;color:#444;">0</div><div class="t" style="right:53px;top:249px;font-size:12.5px;font-weight:400;color:#444;">0</div><div style="position:absolute;left:0px;top:299px;width:1770px;height:1px;background:#e6e6e6"></div><div class="t" style="left:8px;top:278px;font-size:12.8px;font-weight:400;color:#444;">ContentVersion</div><svg style="position:absolute;left:196px;top:279px" width="13" height="13" viewBox="0 0 13 13"><circle cx="6.5" cy="6.5" r="6.5" fill="#3cb43c"/><path d="M3.2 6.7 L5.6 9 L10 4.5" fill="none" stroke="#fff" stroke-width="2.1"/></svg><div class="t" style="left:217.5px;top:279px;font-size:12px;font-weight:400;color:#444;">Success</div><div class="t" style="left:336px;top:279px;font-size:12px;font-weight:400;color:#444;">1 sec</div><div class="t" style="left:448px;top:279px;font-size:12.5px;font-weight:400;color:#444;">10/21/22, 12:56:51 PM</div><div class="t" style="left:608px;top:279px;font-size:12.5px;font-weight:400;color:#444;">10/21/22, 12:56:51 PM</div><div style="position:absolute;left:789.5px;top:286px;width:12px;height:1px;background:#3a3a3a"></div><div class="t" style="right:278px;top:279px;font-size:12.5px;font-weight:400;color:#444;">0</div><div class="t" style="right:165.5px;top:279px;font-size:12.5px;font-weight:400;color:#444;">0</div><div class="t" style="right:53px;top:279px;font-size:12.5px;font-weight:400;color:#444;">0</div><div style="position:absolute;left:0px;top:329px;width:1770px;height:1px;background:#e6e6e6"></div><div class="t" style="left:8px;top:308px;font-size:12.8px;font-weight:400;color:#444;">ContentDocument</div><svg style="position:absolute;left:196px;top:309px" width="13" height="13" viewBox="0 0 13 13"><circle cx="6.5" cy="6.5" r="6.5" fill="#3cb43c"/><path d="M3.2 6.7 L5.6 9 L10 4.5" fill="none" stroke="#fff" stroke-width="2.1"/></svg><div class="t" style="left:217.5px;top:309px;font-size:12px;font-weight:400;color:#444;">Success</div><div class="t" style="left:336px;top:309px;font-size:12px;font-weight:400;color:#444;">1 sec</div><div class="t" style="left:448px;top:309px;font-size:12.5px;font-weight:400;color:#444;">10/21/22, 12:56:51 PM</div><div class="t" style="left:608px;top:309px;font-size:12.5px;font-weight:400;color:#444;">10/21/22, 12:56:51 PM</div><div style="position:absolute;left:789.5px;top:316px;width:12px;height:1px;background:#3a3a3a"></div><div class="t" style="right:278px;top:309px;font-size:12.5px;font-weight:400;color:#444;">0</div><div class="t" style="right:165.5px;top:309px;font-size:12.5px;font-weight:400;color:#444;">0</div><div class="t" style="right:53px;top:309px;font-size:12.5px;font-weight:400;color:#444;">0</div><div style="position:absolute;left:0px;top:359px;width:1770px;height:1px;background:#e6e6e6"></div><div class="t" style="left:8px;top:338px;font-size:12.8px;font-weight:400;color:#444;">Document</div><svg style="position:absolute;left:196px;top:339px" width="13" height="13" viewBox="0 0 13 13"><circle cx="6.5" cy="6.5" r="6.5" fill="#3cb43c"/><path d="M3.2 6.7 L5.6 9 L10 4.5" fill="none" stroke="#fff" stroke-width="2.1"/></svg><div class="t" style="left:217.5px;top:339px;font-size:12px;font-weight:400;color:#444;">Success</div><div class="t" style="left:336px;top:339px;font-size:12px;font-weight:400;color:#444;">1 sec</div><div class="t" style="left:448px;top:339px;font-size:12.5px;font-weight:400;color:#444;">10/21/22, 12:56:51 PM</div><div class="t" style="left:608px;top:339px;font-size:12.5px;font-weight:400;color:#444;">10/21/22, 12:56:51 PM</div><div style="position:absolute;left:789.5px;top:346px;width:12px;height:1px;background:#3a3a3a"></div><div class="t" style="right:278px;top:339px;font-size:12.5px;font-weight:400;color:#444;">0</div><div class="t" style="right:165.5px;top:339px;font-size:12.5px;font-weight:400;color:#444;">0</div><div class="t" style="right:53px;top:339px;font-size:12.5px;font-weight:400;color:#444;">0</div><div style="position:absolute;left:0px;top:389px;width:1770px;height:1px;background:#e6e6e6"></div><div class="t" style="left:8px;top:368px;font-size:12.8px;font-weight:400;color:#444;">Attachment</div><svg style="position:absolute;left:196px;top:369px" width="13" height="13" viewBox="0 0 13 13"><circle cx="6.5" cy="6.5" r="6.5" fill="#3cb43c"/><path d="M3.2 6.7 L5.6 9 L10 4.5" fill="none" stroke="#fff" stroke-width="2.1"/></svg><div class="t" style="left:217.5px;top:369px;font-size:12px;font-weight:400;color:#444;">Success</div><div class="t" style="left:336px;top:369px;font-size:12px;font-weight:400;color:#444;">1 sec</div><div class="t" style="left:448px;top:369px;font-size:12.5px;font-weight:400;color:#444;">10/21/22, 12:56:51 PM</div><div class="t" style="left:608px;top:369px;font-size:12.5px;font-weight:400;color:#444;">10/21/22, 12:56:51 PM</div><div style="position:absolute;left:789.5px;top:376px;width:12px;height:1px;background:#3a3a3a"></div><div class="t" style="right:278px;top:369px;font-size:12.5px;font-weight:400;color:#444;">0</div><div class="t" style="right:165.5px;top:369px;font-size:12.5px;font-weight:400;color:#444;">0</div><div class="t" style="right:53px;top:369px;font-size:12.5px;font-weight:400;color:#444;">0</div></div>
</body></html>
